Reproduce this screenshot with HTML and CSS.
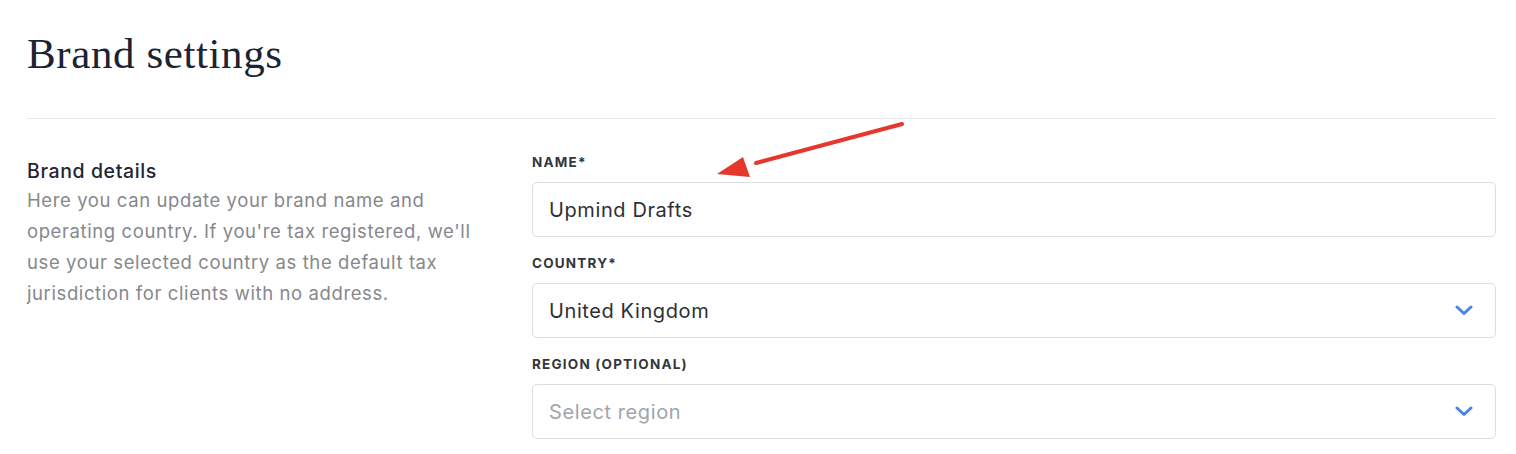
FILE: index.html
```html
<!DOCTYPE html>
<html lang="en">
<head>
<meta charset="utf-8">
<title>Brand settings</title>
<link rel="stylesheet" href="styles.css">
</head>
<body>
<div class="page">
  <h1 class="title">Brand settings</h1>
  <hr class="divider">
  <section class="section">
    <div class="intro">
      <h2 class="intro-title">Brand details</h2>
      <p class="intro-text">Here you can update your brand name and operating country. If you're tax registered, we'll use your selected country as the default tax jurisdiction for clients with no address.</p>
    </div>
    <div class="fields">
      <div class="field">
        <label class="label">NAME*</label>
        <div class="control"><span class="value">Upmind Drafts</span></div>
      </div>
      <div class="field">
        <label class="label">COUNTRY*</label>
        <div class="control select"><span class="value">United Kingdom</span>
          <svg class="chev" width="18" height="11" viewBox="0 0 18 11"><path d="M2 2 L9 8.5 L16 2" fill="none" stroke="#4a83e6" stroke-width="3" stroke-linecap="round" stroke-linejoin="round"/></svg>
        </div>
      </div>
      <div class="field">
        <label class="label">REGION (OPTIONAL)</label>
        <div class="control select"><span class="value placeholder">Select region</span>
          <svg class="chev" width="18" height="11" viewBox="0 0 18 11"><path d="M2 2 L9 8.5 L16 2" fill="none" stroke="#4a83e6" stroke-width="3" stroke-linecap="round" stroke-linejoin="round"/></svg>
        </div>
      </div>
    </div>
  </section>
  <svg class="arrow" width="200" height="60" viewBox="0 0 200 60">
    <line x1="186" y1="4" x2="40" y2="43" stroke="#e5372b" stroke-width="4" stroke-linecap="round"/>
    <polygon points="1,54 27,37 34,57" fill="#e5372b"/>
  </svg>
</div>
</body>
</html>
```
FILE: styles.css
```css
* { box-sizing: border-box; }
html, body { margin: 0; padding: 0; background: #fff; }
body { font-family: Inter, "Noto Sans", sans-serif; }
.page { position: relative; padding: 26px 20px 0 27px; }
.title {
  margin: 0;
  font-family: "Liberation Serif", "DejaVu Serif", serif;
  font-weight: 400;
  font-size: 43px;
  line-height: 56px;
  letter-spacing: 0.6px;
  color: #1c2333;
}
.divider { border: 0; border-top: 1px solid #e6e8ec; margin: 36px 0 0; }
.section { display: grid; grid-template-columns: 505px 1fr; padding-top: 33px; }
.intro-title { margin: 6px 0 0; font-size: 19.5px; font-weight: 500; line-height: 26px; letter-spacing: 0.6px; color: #1f2633; }
.intro-text { margin: 1px 0 0; font-size: 18.5px; line-height: 31px; letter-spacing: 0.6px; color: #86888c; max-width: 450px; }
.fields { display: flex; flex-direction: column; gap: 18px; padding-top: 2px; }
.field { display: flex; flex-direction: column; gap: 12px; }
.label { font-size: 13.5px; font-weight: 700; letter-spacing: 1.2px; line-height: 16px; color: #33363b; }
.control {
  height: 55px; border: 1px solid #dcdee2; border-radius: 5px;
  display: flex; align-items: center; justify-content: space-between;
  padding: 0 22px 0 16px;
}
.value { font-size: 20px; letter-spacing: 0.6px; color: #2d3035; }
.placeholder { color: #a2a5aa; }
.chev { display: block; }
.arrow { position: absolute; left: 716px; top: 120px; }
```
